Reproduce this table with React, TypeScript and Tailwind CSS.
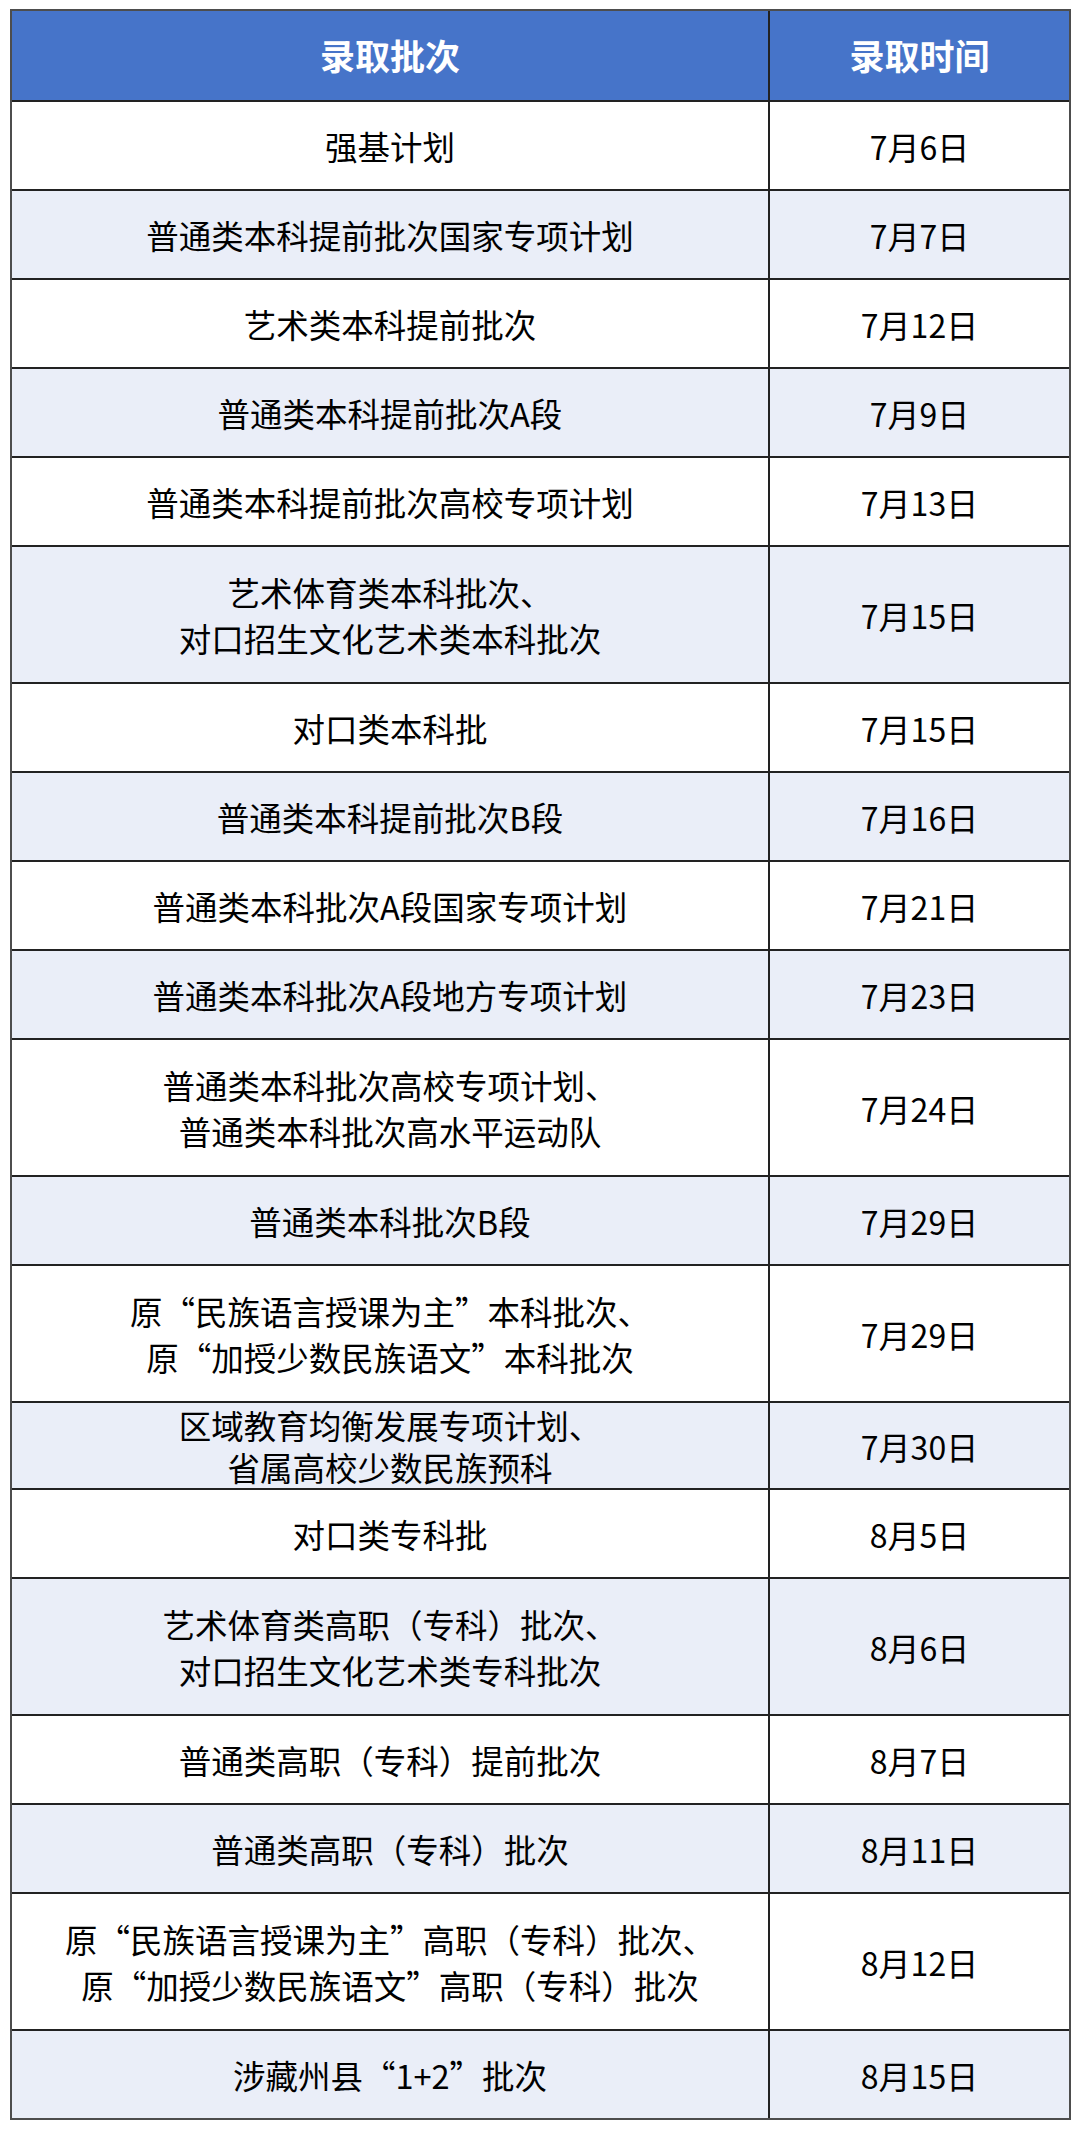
import React from "react";

type Row = { lines: string[]; date: string; h: "s" | "d" | "x" };

const rows: Row[] = [
  { lines: ["强基计划"], date: "7月6日", h: "s" },
  { lines: ["普通类本科提前批次国家专项计划"], date: "7月7日", h: "s" },
  { lines: ["艺术类本科提前批次"], date: "7月12日", h: "s" },
  { lines: ["普通类本科提前批次A段"], date: "7月9日", h: "s" },
  { lines: ["普通类本科提前批次高校专项计划"], date: "7月13日", h: "s" },
  { lines: ["艺术体育类本科批次、", "对口招生文化艺术类本科批次"], date: "7月15日", h: "d" },
  { lines: ["对口类本科批"], date: "7月15日", h: "s" },
  { lines: ["普通类本科提前批次B段"], date: "7月16日", h: "s" },
  { lines: ["普通类本科批次A段国家专项计划"], date: "7月21日", h: "s" },
  { lines: ["普通类本科批次A段地方专项计划"], date: "7月23日", h: "s" },
  { lines: ["普通类本科批次高校专项计划、", "普通类本科批次高水平运动队"], date: "7月24日", h: "d" },
  { lines: ["普通类本科批次B段"], date: "7月29日", h: "s" },
  { lines: ["原“民族语言授课为主”本科批次、", "原“加授少数民族语文”本科批次"], date: "7月29日", h: "d" },
  { lines: ["区域教育均衡发展专项计划、", "省属高校少数民族预科"], date: "7月30日", h: "x" },
  { lines: ["对口类专科批"], date: "8月5日", h: "s" },
  { lines: ["艺术体育类高职（专科）批次、", "对口招生文化艺术类专科批次"], date: "8月6日", h: "d" },
  { lines: ["普通类高职（专科）提前批次"], date: "8月7日", h: "s" },
  { lines: ["普通类高职（专科）批次"], date: "8月11日", h: "s" },
  { lines: ["原“民族语言授课为主”高职（专科）批次、", "原“加授少数民族语文”高职（专科）批次"], date: "8月12日", h: "d" },
  { lines: ["涉藏州县“1+2”批次"], date: "8月15日", h: "s" },
];

const heightClass = (h: Row["h"]) =>
  h === "d" ? "h-[137px]" : h === "x" ? "h-[87px]" : "h-[89px]";

export default function App() {
  return (
    <div
      lang="zh-CN"
      className="w-[1080px] h-[2130px] bg-white pt-[9px] pl-[10px]"
      style={{ fontFamily: '"Noto Sans CJK SC", "Microsoft YaHei", "Noto Sans", sans-serif' }}
    >
      <div className="w-[1061px] border-2 border-[#4d4d4d] flex flex-col">
        <div className="flex h-[89px] bg-[#4674c9] text-white font-bold text-[35px]">
          <div className="w-[758px] flex items-center justify-center border-r-2 border-[#222]">
            录取批次
          </div>
          <div className="flex-1 flex items-center justify-center">录取时间</div>
        </div>
        {rows.map((r, i) => (
          <div
            key={i}
            className={`flex border-t-2 border-[#222] text-black overflow-hidden ${heightClass(r.h)} ${
              r.h === "x" ? "leading-[42px]" : "leading-[46px]"
            } ${i % 2 === 1 ? "bg-[#eaeef8]" : "bg-white"}`}
          >
            <div className="w-[758px] flex flex-col items-center justify-center border-r-2 border-[#222] shrink-0 text-[32.5px]">
              {r.lines.map((l, j) => (
                <div key={j} className="whitespace-nowrap">
                  {l}
                </div>
              ))}
            </div>
            <div className="flex-1 flex items-center justify-center text-[32px]">{r.date}</div>
          </div>
        ))}
      </div>
    </div>
  );
}
